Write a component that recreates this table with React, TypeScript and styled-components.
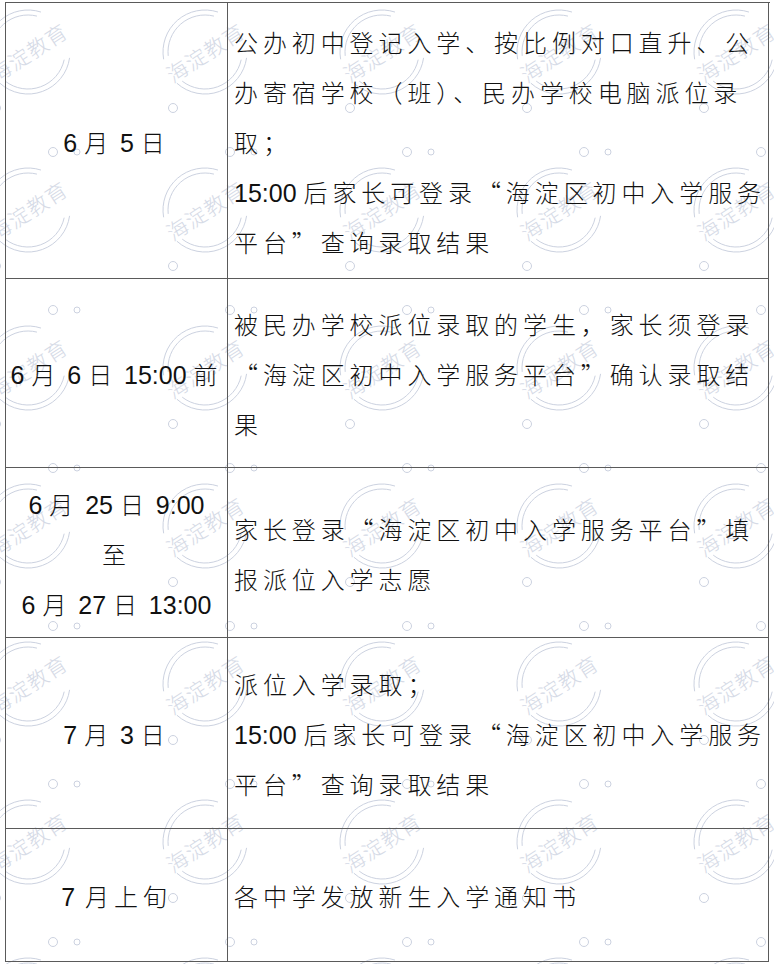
import React from 'react';
import styled, { createGlobalStyle } from 'styled-components';

const GlobalStyle = createGlobalStyle`
	html,
	body {
		margin: 0;
		padding: 0;
		background: #ffffff;
	}
	body {
		font-family: "Noto Sans CJK SC", "Liberation Sans", sans-serif;
	}
`;

const LINE = '#5a5a5a';
const MARK = '#ccd2e0';
const MARK_TEXT = '#d5dae6';

const Page = styled.div`
	position: relative;
	width: 774px;
	height: 964px;
	overflow: hidden;
	background: #ffffff;
`;

const WatermarkLayer = styled.svg`
	position: absolute;
	top: 0;
	left: 0;
	pointer-events: none;
`;

const Table = styled.div`
	position: relative;
	z-index: 1;
	display: grid;
	grid-template-columns: 222px 541px;
	width: 764px;
	margin: 2px 0 0 5px;
	border-top: 1px solid ${LINE};
	border-left: 1px solid ${LINE};
	color: #111111;
	font-family: "Noto Sans CJK SC", "Liberation Sans", sans-serif;
	font-size: 24px;
	font-weight: 300;
	letter-spacing: 4.9px;
	line-height: 50px;
`;

const Cell = styled.div<{ $h: number }>`
	box-sizing: border-box;
	height: ${(p) => p.$h}px;
	padding-top: 2px;
	border-right: 1px solid ${LINE};
	border-bottom: 1px solid ${LINE};
	display: flex;
	flex-direction: column;
	justify-content: center;
`;

const DateCell = styled(Cell)`
	align-items: center;
	text-align: center;
	white-space: nowrap;
`;

const TextCell = styled(Cell)`
	padding-left: 6px;
	padding-right: 1px;
`;

const Line = styled.div``;

const Para = styled.p`
	margin: 0;
`;

const Num = styled.span<{ $ls?: number }>`
	font-family: "Liberation Sans", Arial, sans-serif;
	font-size: 25px;
	line-height: 1;
	letter-spacing: ${(p) => p.$ls ?? 0}px;
`;

const Q = styled.span`
	font-family: "Noto Sans CJK SC", sans-serif;
	font-feature-settings: "fwid" 1;
`;

// arc around the stamp centre, angles in degrees counter-clockwise from +x
const arc = (r: number, a0: number, a1: number) => {
	const rad = (d: number) => (d * Math.PI) / 180;
	const x0 = r * Math.cos(rad(a0));
	const y0 = -r * Math.sin(rad(a0));
	const x1 = r * Math.cos(rad(a1));
	const y1 = -r * Math.sin(rad(a1));
	const large = (a1 - a0 + 360) % 360 > 180 ? 1 : 0;
	return `M${x0.toFixed(2)} ${y0.toFixed(2)} A${r} ${r} 0 ${large} 0 ${x1.toFixed(2)} ${y1.toFixed(2)}`;
};

const Stamp = ({ x, y }: { x: number; y: number }) => (
	<g transform={`translate(${x} ${y})`}>
		<g fill="none" stroke={MARK} strokeWidth={1}>
			<path d={arc(42, 72, 190)} />
			<path d={arc(37, 76, 186)} />
			<path d={arc(42, 228, 352)} />
			<path d={arc(37, 232, 348)} />
			<circle cx={145} cy={56} r={4.5} />
			<circle cx={25} cy={100} r={4.5} />
			<circle cx={49} cy={100} r={3} />
		</g>
		<text
			transform="rotate(-33)"
			textAnchor="middle"
			dominantBaseline="central"
			fill={MARK_TEXT}
			fontSize={21}
			fontFamily='"Noto Sans CJK SC", sans-serif'
			fontWeight={300}
			letterSpacing={1}
		>
			海淀教育
		</text>
	</g>
);

const Watermark = () => {
	const stamps: { x: number; y: number }[] = [];
	for (let i = -1; i <= 5; i++) {
		for (let j = -1; j <= 6; j++) {
			stamps.push({ x: 28 + 177 * i, y: 52 + 158 * j });
		}
	}
	return (
		<WatermarkLayer width={774} height={964} viewBox="0 0 774 964">
			{stamps.map((s) => (
				<Stamp key={`${s.x}-${s.y}`} x={s.x} y={s.y} />
			))}
		</WatermarkLayer>
	);
};

const Platform = () => (
	<>
		<wbr />
		<Q>“</Q>海淀区初中入学服务平台<Q>”</Q>
	</>
);

export default function App() {
	return (
		<Page>
			<GlobalStyle />
			<Watermark />
			<Table>
				<DateCell $h={276}>
					<Line>
						<Num>6 </Num>月<Num> 5 </Num>日
					</Line>
				</DateCell>
				<TextCell $h={276}>
					<Para>公办初中登记入学、按比例对口直升、公办寄宿学校（班）、民办学校电脑派位录取；</Para>
					<Para>
						<Num>15:00 </Num>后家长可登录<Platform />查询录取结果
					</Para>
				</TextCell>

				<DateCell $h={189}>
					<Line>
						<Num>6 </Num>月<Num> 6 </Num>日<Num> 15:00 </Num>前
					</Line>
				</DateCell>
				<TextCell $h={189}>
					<Para>
						被民办学校派位录取的学生，家长须登录<Platform />确认录取结果
					</Para>
				</TextCell>

				<DateCell $h={170}>
					<Line>
						<Num>6 </Num>月<Num> 25 </Num>日<Num> 9:00</Num>
					</Line>
					<Line>至</Line>
					<Line>
						<Num>6 </Num>月<Num> 27 </Num>日<Num> 13:00</Num>
					</Line>
				</DateCell>
				<TextCell $h={170}>
					<Para>
						家长登录<Platform />填报派位入学志愿
					</Para>
				</TextCell>

				<DateCell $h={191}>
					<Line>
						<Num>7 </Num>月<Num> 3 </Num>日
					</Line>
				</DateCell>
				<TextCell $h={191}>
					<Para>派位入学录取；</Para>
					<Para>
						<Num>15:00 </Num>后家长可登录<Platform />查询录取结果
					</Para>
				</TextCell>

				<DateCell $h={133}>
					<Line>
						<Num $ls={10}>7</Num>月上旬
					</Line>
				</DateCell>
				<TextCell $h={133}>
					<Para>各中学发放新生入学通知书</Para>
				</TextCell>
			</Table>
		</Page>
	);
}
